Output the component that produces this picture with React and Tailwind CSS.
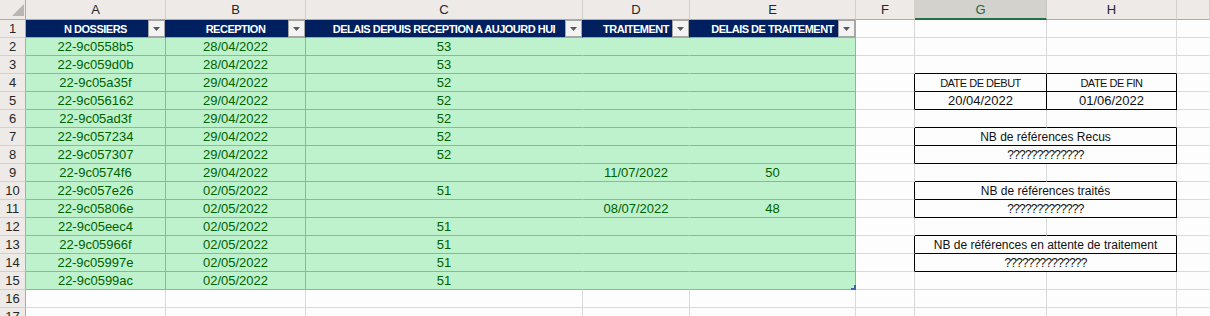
const LETTERS = ['A', 'B', 'C', 'D', 'E', 'F', 'G', 'H', '']

const HEADERS = ['N DOSSIERS', 'RECEPTION', 'DELAIS DEPUIS RECEPTION A AUJOURD HUI', 'TRAITEMENT', 'DELAIS DE TRAITEMENT']

const DATA = [
  ['22-9c0558b5', '28/04/2022', '53', '', ''],
  ['22-9c059d0b', '28/04/2022', '53', '', ''],
  ['22-9c05a35f', '29/04/2022', '52', '', ''],
  ['22-9c056162', '29/04/2022', '52', '', ''],
  ['22-9c05ad3f', '29/04/2022', '52', '', ''],
  ['22-9c057234', '29/04/2022', '52', '', ''],
  ['22-9c057307', '29/04/2022', '52', '', ''],
  ['22-9c0574f6', '29/04/2022', '', '11/07/2022', '50'],
  ['22-9c057e26', '02/05/2022', '51', '', ''],
  ['22-9c05806e', '02/05/2022', '', '08/07/2022', '48'],
  ['22-9c05eec4', '02/05/2022', '51', '', ''],
  ['22-9c05966f', '02/05/2022', '51', '', ''],
  ['22-9c05997e', '02/05/2022', '51', '', ''],
  ['22-9c0599ac', '02/05/2022', '51', '', ''],
]

// right side boxes, keyed by row
const SPLIT = {
  4: ['DATE DE DEBUT', 'DATE DE FIN'],
  5: ['20/04/2022', '01/06/2022'],
}
const MERGED = {
  7: 'NB de références Recus',
  8: '?????????????',
  10: 'NB de références traités',
  11: '?????????????',
  13: 'NB de références en attente de traitement',
  14: '??????????????',
}
const BOX_ROWS = [4, 5, 7, 8, 10, 11, 13, 14]
const inBox = r => BOX_ROWS.includes(r)

const R = {
  grid: 'border-r-[#d9d9d9]',
  black: 'border-r-black',
  blue: 'border-r-[#8ea9db]',
  green: 'border-r-[#bdf2cc]',
  navy: 'border-r-[#002060]',
  none: 'border-r-transparent',
}
const B = {
  grid: 'border-b-[#d9d9d9]',
  black: 'border-b-black',
  blue: 'border-b-[#8ea9db]',
}

function Cell({ r = 'grid', b = 'grid', className = '', children }) {
  return (
    <div className={`relative flex items-center justify-center overflow-visible whitespace-nowrap border-r border-b pt-px ${R[r]} ${B[b]} ${className}`}>
      {children}
    </div>
  )
}

function FilterBtn() {
  return (
    <span className="absolute right-0 top-0 flex h-[17px] w-[17px] items-center justify-center border border-[#a6a6a6] bg-[#f3f3f3]">
      <svg width="7" height="4" viewBox="0 0 7 4">
        <path d="M0 0h7L3.5 4z" fill="#595959" />
      </svg>
    </span>
  )
}

function Handle() {
  return (
    <svg className="absolute -right-px -bottom-px" width="5" height="5" viewBox="0 0 5 5">
      <path d="M3 0h2v5H0V3h3z" fill="#3a63b5" />
    </svg>
  )
}

function RowHead({ n }) {
  return (
    <div className="flex items-center justify-center border-r border-b border-r-[#ababab] border-b-[#d3cfcb] bg-[#edeae7] pt-px text-[13px] text-[#262626]">
      {n}
    </div>
  )
}

function TableCells({ row }) {
  if (row === 1) {
    return HEADERS.map((h, i) => (
      <Cell key={i} r={i === 4 ? 'blue' : 'navy'} b="blue" className="bg-[#002060] text-[11px] font-bold tracking-[-0.5px] text-white">
        {h}
        <FilterBtn />
      </Cell>
    ))
  }
  if (row <= 15) {
    const vals = DATA[row - 2]
    return vals.map((v, i) => (
      <Cell key={i} r={i === 2 || i === 3 ? 'green' : 'blue'} b="blue" className="bg-[#bdf2cc] text-[13px] text-[#006100]">
        {v}
        {row === 15 && i === 4 && <Handle />}
      </Cell>
    ))
  }
  return [0, 1, 2, 3, 4].map(i => <Cell key={i} className="bg-[#fdfdfd]" />)
}

function boxText(t) {
  if (t.startsWith('?')) return 'text-[12px] tracking-[-0.8px]'
  if (t === t.toUpperCase() && /[A-Z]/.test(t)) return 'text-[11px] tracking-[-0.5px]'
  if (/[a-z]/.test(t)) return 'text-[12px]'
  return 'text-[13px]'
}

function SideCells({ row }) {
  const boxed = inBox(row)
  const edge = boxed || inBox(row + 1)
  const cells = [<Cell key="f" r={boxed ? 'black' : 'grid'} className="bg-[#fdfdfd]" />]

  if (MERGED[row]) {
    cells.push(
      <Cell key="gh" r="black" b="black" className={`col-span-2 bg-[#fdfdfd] text-[#111] ${boxText(MERGED[row])}`}>
        {MERGED[row]}
      </Cell>
    )
  } else {
    const [g, h] = SPLIT[row] || ['', '']
    cells.push(
      <Cell key="g" r={boxed ? 'black' : 'grid'} b={edge ? 'black' : 'grid'} className={`bg-[#fdfdfd] text-[#111] ${boxText(g)}`}>
        {g}
      </Cell>,
      <Cell key="h" r={boxed ? 'black' : 'grid'} b={edge ? 'black' : 'grid'} className={`bg-[#fdfdfd] text-[#111] ${boxText(h)}`}>
        {h}
      </Cell>
    )
  }
  cells.push(<Cell key="i" r="none" className="bg-[#fdfdfd]" />)
  return cells
}

export default function App() {
  const rows = Array.from({ length: 17 }, (_, i) => i + 1)

  return (
    <div className="h-[316px] w-[1210px] overflow-hidden bg-[#fdfdfd] font-['Liberation_Sans',Arial,sans-serif]">
      <div className="grid grid-cols-[26px_140px_140px_277px_107px_166px_59px_132px_130px_1fr] grid-rows-[20px] auto-rows-[18px]">
        {/* column letters */}
        <div className="flex items-end justify-end border-r border-b border-r-[#ababab] border-b-[#ababab] bg-[#edeae7] pr-px pb-[3px]">
          <svg width="12" height="12" viewBox="0 0 12 12">
            <path d="M12 0V12H0z" fill="#b8b5b2" />
          </svg>
        </div>
        {LETTERS.map((l, i) =>
          l === 'G' ? (
            <div key={i} className="flex items-center justify-center border-r border-b-2 border-r-[#c9c5c1] border-b-[#217346] bg-[#d3d2cd] pt-[2px] text-[13px] text-[#1d6b41]">
              {l}
            </div>
          ) : (
            <div key={i} className="flex items-center justify-center border-r border-b border-r-[#d3cfcb] border-b-[#ababab] bg-[#edeae7] pt-px text-[13px] text-[#262626]">
              {l}
            </div>
          )
        )}

        {rows.map(row => [
          <RowHead key={`h${row}`} n={row} />,
          <TableCells key={`t${row}`} row={row} />,
          <SideCells key={`s${row}`} row={row} />,
        ])}
      </div>
    </div>
  )
}
